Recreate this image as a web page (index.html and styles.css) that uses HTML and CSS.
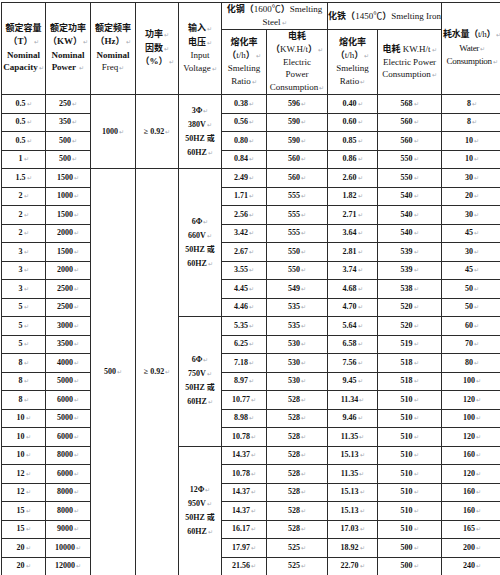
FILE: index.html
```html
<!DOCTYPE html>
<html>
<head>
<meta charset="utf-8">
<title>中频感应熔炼炉技术参数</title>
<link rel="stylesheet" href="styles.css">
</head>
<body>
<div class="wrap">
<table class="spec">
<colgroup>
<col class="c1"><col class="c2"><col class="c3"><col class="c4"><col class="c5">
<col class="c6"><col class="c7"><col class="c8"><col class="c9"><col class="c10">
</colgroup>
<thead>
<tr class="hr1">
<th rowspan="2"><b>额定容量</b><br><b>（T）</b><span class="m">↵</span><br><span class="bl">Nominal</span><br><span class="bl">Capacity</span><span class="m">↵</span></th>
<th rowspan="2"><b>额定功率</b><br><b>（KW）</b><span class="m">↵</span><br><span class="bl">Nominal</span><br><span class="bl">Power</span> <span class="m">↵</span></th>
<th rowspan="2"><b>额定频率</b><br><b>（Hz）</b><span class="m">↵</span><br><span class="bl">Nominal</span><br>Freq<span class="m">↵</span></th>
<th rowspan="2"><b>功率</b><span class="m">↵</span><br><b>因数</b><span class="m">↵</span><br><b>（%）</b><span class="m">↵</span></th>
<th rowspan="2"><b>输入</b><span class="m">↵</span><br><b>电压</b><span class="m">↵</span><br>Input<br>Voltage<span class="m">↵</span></th>
<th colspan="2"><b>化钢（</b>1600℃<b>）</b>Smelting<br>Steel<span class="m">↵</span></th>
<th colspan="2"><b>化铁（</b>1450℃<b>）</b>Smelting Iron</th>
<th rowspan="2" class="wc"><b>耗水量（</b>t/h<b>）</b><span class="m">↵</span><br>Water<span class="m">↵</span><br>Consumption<span class="m">↵</span></th>
</tr>
<tr class="hr2">
<th><b>熔化率</b><br><b>（</b>t/h<b>）</b><span class="m">↵</span><br>Smelting<br>Ratio<span class="m">↵</span></th>
<th><b>电耗</b><br><b>（</b>KW.H/t<b>）</b><span class="m">↵</span><br>Electric<br>Power<br>Consumption<span class="m">↵</span></th>
<th><b>熔化率</b><br><b>（</b>t/h<b>）</b><span class="m">↵</span><br>Smelting<br>Ratio<span class="m">↵</span></th>
<th><b>电耗</b> KW.H/t<span class="m">↵</span><br>Electric Power<br>Consumption<span class="m">↵</span></th>
</tr>
</thead>
<tbody>
<tr><td>0.5<span class="m">↵</span></td><td>250<span class="m">↵</span></td><td rowspan="4">1000<span class="m">↵</span></td><td rowspan="4">≥ 0.92<span class="m">↵</span></td><td rowspan="4" class="v">3Φ<span class="m">↵</span><br>380V<span class="m">↵</span><br>50HZ 或<br>60HZ<span class="m">↵</span></td><td>0.38<span class="m">↵</span></td><td>596<span class="m">↵</span></td><td>0.40<span class="m">↵</span></td><td>568<span class="m">↵</span></td><td>8<span class="m">↵</span></td></tr>
<tr><td>0.5<span class="m">↵</span></td><td>350<span class="m">↵</span></td><td>0.56<span class="m">↵</span></td><td>590<span class="m">↵</span></td><td>0.60<span class="m">↵</span></td><td>560<span class="m">↵</span></td><td>8<span class="m">↵</span></td></tr>
<tr><td>0.5<span class="m">↵</span></td><td>500<span class="m">↵</span></td><td>0.80<span class="m">↵</span></td><td>590<span class="m">↵</span></td><td>0.85<span class="m">↵</span></td><td>560<span class="m">↵</span></td><td>10<span class="m">↵</span></td></tr>
<tr><td>1<span class="m">↵</span></td><td>500<span class="m">↵</span></td><td>0.84<span class="m">↵</span></td><td>560<span class="m">↵</span></td><td>0.86<span class="m">↵</span></td><td>550<span class="m">↵</span></td><td>10<span class="m">↵</span></td></tr>
<tr><td>1.5<span class="m">↵</span></td><td>1500<span class="m">↵</span></td><td rowspan="22">500<span class="m">↵</span></td><td rowspan="22">≥ 0.92<span class="m">↵</span></td><td rowspan="8" class="v">6Φ<span class="m">↵</span><br>660V<span class="m">↵</span><br>50HZ 或<br>60HZ<span class="m">↵</span></td><td>2.49<span class="m">↵</span></td><td>560<span class="m">↵</span></td><td>2.60<span class="m">↵</span></td><td>550<span class="m">↵</span></td><td>30<span class="m">↵</span></td></tr>
<tr><td>2<span class="m">↵</span></td><td>1000<span class="m">↵</span></td><td>1.71<span class="m">↵</span></td><td>555<span class="m">↵</span></td><td>1.82<span class="m">↵</span></td><td>540<span class="m">↵</span></td><td>20<span class="m">↵</span></td></tr>
<tr><td>2<span class="m">↵</span></td><td>1500<span class="m">↵</span></td><td>2.56<span class="m">↵</span></td><td>555<span class="m">↵</span></td><td>2.71<span class="m">↵</span></td><td>540<span class="m">↵</span></td><td>30<span class="m">↵</span></td></tr>
<tr><td>2<span class="m">↵</span></td><td>2000<span class="m">↵</span></td><td>3.42<span class="m">↵</span></td><td>555<span class="m">↵</span></td><td>3.64<span class="m">↵</span></td><td>540<span class="m">↵</span></td><td>45<span class="m">↵</span></td></tr>
<tr><td>3<span class="m">↵</span></td><td>1500<span class="m">↵</span></td><td>2.67<span class="m">↵</span></td><td>550<span class="m">↵</span></td><td>2.81<span class="m">↵</span></td><td>539<span class="m">↵</span></td><td>30<span class="m">↵</span></td></tr>
<tr><td>3<span class="m">↵</span></td><td>2000<span class="m">↵</span></td><td>3.55<span class="m">↵</span></td><td>550<span class="m">↵</span></td><td>3.74<span class="m">↵</span></td><td>539<span class="m">↵</span></td><td>45<span class="m">↵</span></td></tr>
<tr><td>3<span class="m">↵</span></td><td>2500<span class="m">↵</span></td><td>4.45<span class="m">↵</span></td><td>549<span class="m">↵</span></td><td>4.68<span class="m">↵</span></td><td>538<span class="m">↵</span></td><td>50<span class="m">↵</span></td></tr>
<tr><td>5<span class="m">↵</span></td><td>2500<span class="m">↵</span></td><td>4.46<span class="m">↵</span></td><td>535<span class="m">↵</span></td><td>4.70<span class="m">↵</span></td><td>520<span class="m">↵</span></td><td>50<span class="m">↵</span></td></tr>
<tr><td>5<span class="m">↵</span></td><td>3000<span class="m">↵</span></td><td rowspan="7" class="v">6Φ<span class="m">↵</span><br>750V<span class="m">↵</span><br>50HZ 或<br>60HZ<span class="m">↵</span></td><td>5.35<span class="m">↵</span></td><td>535<span class="m">↵</span></td><td>5.64<span class="m">↵</span></td><td>520<span class="m">↵</span></td><td>60<span class="m">↵</span></td></tr>
<tr><td>5<span class="m">↵</span></td><td>3500<span class="m">↵</span></td><td>6.25<span class="m">↵</span></td><td>530<span class="m">↵</span></td><td>6.58<span class="m">↵</span></td><td>519<span class="m">↵</span></td><td>70<span class="m">↵</span></td></tr>
<tr><td>8<span class="m">↵</span></td><td>4000<span class="m">↵</span></td><td>7.18<span class="m">↵</span></td><td>530<span class="m">↵</span></td><td>7.56<span class="m">↵</span></td><td>518<span class="m">↵</span></td><td>80<span class="m">↵</span></td></tr>
<tr><td>8<span class="m">↵</span></td><td>5000<span class="m">↵</span></td><td>8.97<span class="m">↵</span></td><td>530<span class="m">↵</span></td><td>9.45<span class="m">↵</span></td><td>518<span class="m">↵</span></td><td>100<span class="m">↵</span></td></tr>
<tr><td>8<span class="m">↵</span></td><td>6000<span class="m">↵</span></td><td>10.77<span class="m">↵</span></td><td>528<span class="m">↵</span></td><td>11.34<span class="m">↵</span></td><td>510<span class="m">↵</span></td><td>120<span class="m">↵</span></td></tr>
<tr><td>10<span class="m">↵</span></td><td>5000<span class="m">↵</span></td><td>8.98<span class="m">↵</span></td><td>528<span class="m">↵</span></td><td>9.46<span class="m">↵</span></td><td>510<span class="m">↵</span></td><td>100<span class="m">↵</span></td></tr>
<tr><td>10<span class="m">↵</span></td><td>6000<span class="m">↵</span></td><td>10.78<span class="m">↵</span></td><td>528<span class="m">↵</span></td><td>11.35<span class="m">↵</span></td><td>510<span class="m">↵</span></td><td>120<span class="m">↵</span></td></tr>
<tr><td>10<span class="m">↵</span></td><td>8000<span class="m">↵</span></td><td rowspan="7" class="v">12Φ<span class="m">↵</span><br>950V<span class="m">↵</span><br>50HZ 或<br>60HZ<span class="m">↵</span></td><td>14.37<span class="m">↵</span></td><td>528<span class="m">↵</span></td><td>15.13<span class="m">↵</span></td><td>510<span class="m">↵</span></td><td>160<span class="m">↵</span></td></tr>
<tr><td>12<span class="m">↵</span></td><td>6000<span class="m">↵</span></td><td>10.78<span class="m">↵</span></td><td>528<span class="m">↵</span></td><td>11.35<span class="m">↵</span></td><td>510<span class="m">↵</span></td><td>120<span class="m">↵</span></td></tr>
<tr><td>12<span class="m">↵</span></td><td>8000<span class="m">↵</span></td><td>14.37<span class="m">↵</span></td><td>528<span class="m">↵</span></td><td>15.13<span class="m">↵</span></td><td>510<span class="m">↵</span></td><td>160<span class="m">↵</span></td></tr>
<tr><td>15<span class="m">↵</span></td><td>8000<span class="m">↵</span></td><td>14.37<span class="m">↵</span></td><td>528<span class="m">↵</span></td><td>15.13<span class="m">↵</span></td><td>510<span class="m">↵</span></td><td>160<span class="m">↵</span></td></tr>
<tr><td>15<span class="m">↵</span></td><td>9000<span class="m">↵</span></td><td>16.17<span class="m">↵</span></td><td>528<span class="m">↵</span></td><td>17.03<span class="m">↵</span></td><td>510<span class="m">↵</span></td><td>165<span class="m">↵</span></td></tr>
<tr><td>20<span class="m">↵</span></td><td>10000<span class="m">↵</span></td><td>17.97<span class="m">↵</span></td><td>525<span class="m">↵</span></td><td>18.92<span class="m">↵</span></td><td>500<span class="m">↵</span></td><td>200<span class="m">↵</span></td></tr>
<tr><td>20<span class="m">↵</span></td><td>12000<span class="m">↵</span></td><td>21.56<span class="m">↵</span></td><td>525<span class="m">↵</span></td><td>22.70<span class="m">↵</span></td><td>500<span class="m">↵</span></td><td>240<span class="m">↵</span></td></tr>
</tbody>
</table>
</div>
</body>
</html>
```

FILE: styles.css
```css
html, body {
  margin: 0;
  padding: 0;
  background: #ffffff;
}

.wrap {
  width: 500px;
  height: 575px;
  overflow: hidden;
  box-sizing: border-box;
  padding: 2px 0 0 1px;
}

.spec {
  border-collapse: collapse;
  table-layout: fixed;
  width: 501px;
  font-family: "Liberation Serif", "Noto Sans CJK SC", serif;
  color: #141414;
}

.c1 { width: 44px; }
.c2 { width: 45px; }
.c3 { width: 45px; }
.c4 { width: 43px; }
.c5 { width: 43px; }
.c6 { width: 45px; }
.c7 { width: 61px; }
.c8 { width: 50px; }
.c9 { width: 64px; }
.c10 { width: 61px; }

.spec th,
.spec td {
  border: 1px solid #2b2b2b;
  padding: 0;
  text-align: center;
  vertical-align: middle;
}

.spec th {
  font-size: 9px;
  line-height: 12.4px;
  font-weight: normal;
  white-space: nowrap;
  overflow: hidden;
}

.hr1 th {
  line-height: 12.6px;
}

.spec th.wc {
  letter-spacing: -0.3px;
}

.spec th b,
.spec th .bl {
  font-weight: bold;
}

.hr1 { height: 26px; }
.hr2 { height: 65px; }

.spec tbody tr { height: 18.5px; }

.spec td {
  font-size: 8px;
  line-height: 10px;
  font-weight: bold;
}

.spec td.v {
  line-height: 14px;
}

.m {
  font-size: 6px;
  font-weight: normal;
  color: #a4a8b0;
  margin-left: 1px;
}
```
